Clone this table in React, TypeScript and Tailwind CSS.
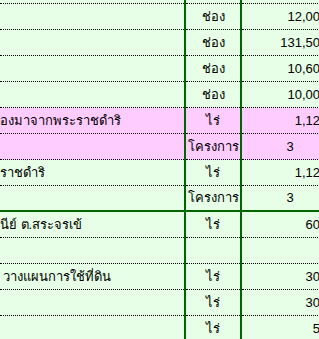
const rows = [
  { left: "", unit: "", num: "", first: true },
  { left: "", unit: "ช่อง", num: "12,00" },
  { left: "", unit: "ช่อง", num: "131,50" },
  { left: "", unit: "ช่อง", num: "10,60" },
  { left: "", unit: "ช่อง", num: "10,00" },
  { left: "องมาจากพระราชดำริ", unit: "ไร่", num: "1,12", pink: true },
  { left: "", unit: "โครงการ", num: "3", pink: true, center: true },
  { left: "ราชดำริ", unit: "ไร่", num: "1,12" },
  { left: "", unit: "โครงการ", num: "3", center: true, thick: true },
  { left: "นีย์ ต.สระจรเข้", unit: "ไร่", num: "60" },
  { left: "", unit: "", num: "" },
  { left: "วางแผนการใช้ที่ดิน", unit: "ไร่", num: "30", indent: true },
  { left: "", unit: "ไร่", num: "30" },
  { left: "", unit: "ไร่", num: "5" },
];

type Row = (typeof rows)[number] & {
  first?: boolean;
  pink?: boolean;
  center?: boolean;
  thick?: boolean;
  indent?: boolean;
};

function cellClass(r: Row) {
  return [
    "flex items-center whitespace-nowrap",
    r.first ? "h-[4px]" : "h-[26px]",
    r.pink ? "bg-[#ffccff]" : "",
    r.thick
      ? "border-b-2 border-solid border-[#006600]"
      : "border-b border-dotted border-black",
  ].join(" ");
}

export default function App() {
  const data = rows as Row[];
  return (
    <div className="w-[319px] h-[339px] overflow-hidden bg-[#e6ffe6] text-black text-[13px] font-['Liberation_Sans','DejaVu_Sans',sans-serif]">
      <div className="flex w-[338px]">
        <div className="w-[184px] flex flex-col">
          {data.map((r, i) => (
            <div key={i} className={cellClass(r)}>
              <span className={r.indent ? "pl-[3px]" : ""}>{r.left}</span>
            </div>
          ))}
        </div>
        <div className="w-[58px] flex flex-col border-x-2 border-[#006600]">
          {data.map((r, i) => (
            <div key={i} className={cellClass(r) + " justify-center"}>
              {r.unit}
            </div>
          ))}
        </div>
        <div className="w-[96px] flex flex-col">
          {data.map((r, i) => (
            <div
              key={i}
              className={
                cellClass(r) + (r.center ? " justify-center" : " justify-end pr-[18px]")
              }
            >
              {r.num}
            </div>
          ))}
        </div>
      </div>
    </div>
  );
}
